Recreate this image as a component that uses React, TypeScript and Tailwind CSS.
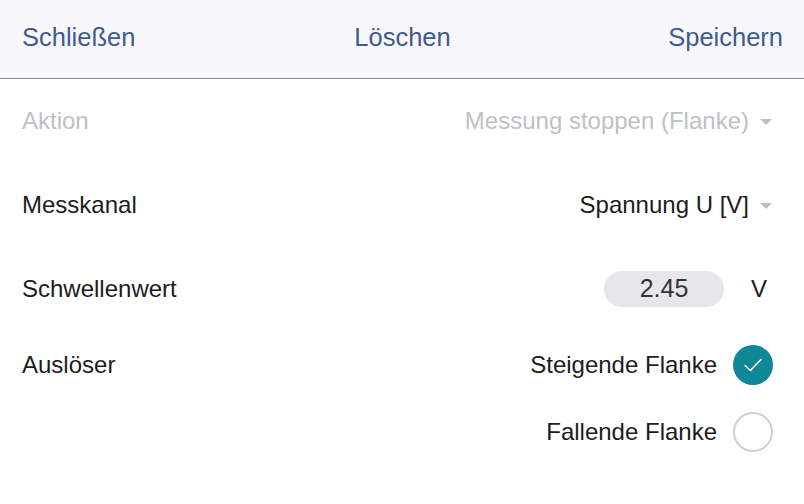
import React from "react";

// Trigger settings dialog

function Caret() {
    return (
        <svg width="12" height="7" viewBox="0 0 12 7" className="ml-[11px] mt-[2px]">
            <path d="M0 0 L12 0 L6 6 Z" fill="#bdbdc2" />
        </svg>
    )
}

function Check({ checked }: { checked: boolean }) {
    if (checked) {
        return (
            <div className="w-[40px] h-[40px] rounded-full bg-[#0e8796] flex items-center justify-center">
                <svg width="20" height="16" viewBox="0 0 20 16" fill="none">
                    <path d="M2 8.5 L7.5 13.5 L18 2.5" stroke="#ffffff" strokeWidth="1.6" strokeLinecap="round" strokeLinejoin="round" />
                </svg>
            </div>
        )
    }
    return <div className="w-[40px] h-[40px] rounded-full border-2 border-[#cfcfd3] bg-white" />
}

export default function App() {
    return (
        <div className="w-[804px] h-[504px] bg-white text-[#1c1c1e] overflow-hidden" style={{ fontFamily: '"Liberation Sans", Arial, sans-serif' }}>
            <div className="h-[79px] bg-[#f8f8fc] border-b border-[#8a8a90] flex items-center pl-[22px] pr-[21px] pb-[3px] text-[#3f5b8f] text-[25.5px]">
                <span className="flex-1">Schließen</span>
                <span>Löschen</span>
                <span className="flex-1 text-right">Speichern</span>
            </div>

            <div className="px-[22px] text-[24px]">
                <div className="h-[84px] flex items-center justify-between">
                    <span className="text-[#c0c0c4]">Aktion</span>
                    <div className="flex items-center pr-[10px]">
                        <span className="text-[#c0c0c4]">Messung stoppen (Flanke)</span>
                        <Caret />
                    </div>
                </div>
                <div className="h-[84px] flex items-center justify-between">
                    <span>Messkanal</span>
                    <div className="flex items-center pr-[10px]">
                        <span>Spannung U [V]</span>
                        <Caret />
                    </div>
                </div>
                <div className="h-[84px] flex items-center justify-between">
                    <span>Schwellenwert</span>
                    <div className="flex items-center">
                        <div className="w-[120px] h-[36px] rounded-full bg-[#e6e6eb] flex items-center justify-center text-[25px] text-[#333336]">2.45</div>
                        <span className="w-[58px] text-center pl-[12px]">V</span>
                    </div>
                </div>
                <div className="flex flex-col gap-[27px] mt-[14px]">
                    <div className="flex items-center justify-between">
                        <span>Auslöser</span>
                        <div className="flex items-center gap-[16px] pr-[9px]">
                            <span>Steigende Flanke</span>
                            <Check checked />
                        </div>
                    </div>
                    <div className="flex items-center justify-end">
                        <div className="flex items-center gap-[16px] pr-[9px]">
                            <span>Fallende Flanke</span>
                            <Check checked={false} />
                        </div>
                    </div>
                </div>
            </div>
        </div>
    )
}
